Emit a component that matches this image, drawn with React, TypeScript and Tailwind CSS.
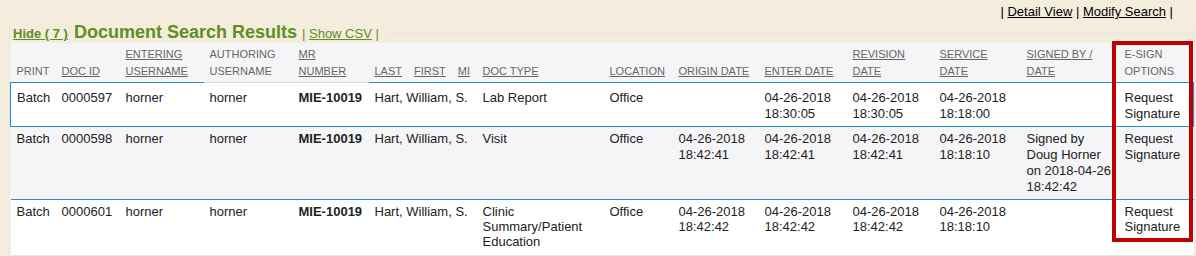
import React from "react";

type Row = {
  docId: string;
  entering: string;
  authoring: string;
  mr: string;
  name: string;
  docType: string[];
  origin: string[];
  enter: string[];
  revision: string[];
  service: string[];
  signed: string[];
  bg: string;
  pad: string;
  selected?: boolean;
};

const rows: Row[] = [
  {
    docId: "0000597",
    entering: "horner",
    authoring: "horner",
    mr: "MIE-10019",
    name: "Hart, William, S.",
    docType: ["Lab Report"],
    origin: [],
    enter: ["04-26-2018", "18:30:05"],
    revision: ["04-26-2018", "18:30:05"],
    service: ["04-26-2018", "18:18:00"],
    signed: [],
    bg: "bg-white",
    pad: "pt-[7px] pb-[4px] leading-[16px]",
    selected: true,
  },
  {
    docId: "0000598",
    entering: "horner",
    authoring: "horner",
    mr: "MIE-10019",
    name: "Hart, William, S.",
    docType: ["Visit"],
    origin: ["04-26-2018", "18:42:41"],
    enter: ["04-26-2018", "18:42:41"],
    revision: ["04-26-2018", "18:42:41"],
    service: ["04-26-2018", "18:18:10"],
    signed: ["Signed by", "Doug Horner", "on 2018-04-26", "18:42:42"],
    bg: "bg-[#f5f5f7]",
    pad: "pt-[4px] pb-[4px] leading-[16px]",
  },
  {
    docId: "0000601",
    entering: "horner",
    authoring: "horner",
    mr: "MIE-10019",
    name: "Hart, William, S.",
    docType: ["Clinic", "Summary/Patient", "Education"],
    origin: ["04-26-2018", "18:42:42"],
    enter: ["04-26-2018", "18:42:42"],
    revision: ["04-26-2018", "18:42:42"],
    service: ["04-26-2018", "18:18:10"],
    signed: [],
    bg: "bg-white",
    pad: "pt-[4px] pb-[6px] leading-[15px]",
  },
];

function Lines({ lines }: { lines: string[] }) {
  return (
    <>
      {lines.map((l, i) => (
        <div key={i} className="whitespace-nowrap">
          {l}
        </div>
      ))}
    </>
  );
}

function Th({
  children,
  line = "border-[#1e8fd0]",
}: {
  children: React.ReactNode;
  line?: string;
}) {
  return (
    <th
      className={`px-[6px] pt-[3px] pb-[2px] text-left align-bottom font-normal text-[11px] leading-[17px] text-[#666] border-b ${line}`}
    >
      {children}
    </th>
  );
}

export default function App() {
  return (
    <div className="relative w-[1196px] h-[256px] overflow-hidden bg-[#f4ecdd] font-['Liberation_Sans',Arial,sans-serif] text-[#222]">
      <div className="flex justify-end pr-[23px] pt-[4px] h-[21px] text-[13px] leading-[16px] text-black">
        <span>
          |{" "}
          <span className="underline">Detail View</span> |{" "}
          <span className="underline">Modify Search</span> |
        </span>
      </div>

      <div className="ml-[9px] mr-[1px] border-l border-r border-[#e9e6e0]">
        <div className="flex items-baseline h-[22px] pl-[3px] text-[#5e8f22]">
          <span className="text-[13px] font-bold underline">Hide ( 7 )</span>
          <span className="ml-[6px] text-[18px] leading-[22px] font-bold">
            Document Search Results
          </span>
          <span className="ml-[5px] text-[13px]">
            | <span className="underline">Show CSV</span> |
          </span>
          <div className="ml-[6px] flex-1 h-px self-center translate-y-[1px] bg-[#e9e6e0]" />
        </div>

        <div className="bg-[#f5f5f7]">
          <table className="table-fixed border-collapse w-[1183px] text-[13px]">
            <colgroup>
              <col className="w-[45px]" />
              <col className="w-[64px]" />
              <col className="w-[84px]" />
              <col className="w-[89px]" />
              <col className="w-[76px]" />
              <col className="w-[108px]" />
              <col className="w-[127px]" />
              <col className="w-[69px]" />
              <col className="w-[86px]" />
              <col className="w-[88px]" />
              <col className="w-[87px]" />
              <col className="w-[87px]" />
              <col className="w-[98px]" />
              <col className="w-[75px]" />
            </colgroup>
            <thead>
              <tr className="h-[38px]">
                <Th>PRINT</Th>
                <Th>
                  <span className="underline">DOC ID</span>
                </Th>
                <Th>
                  <span className="underline">
                    ENTERING
                    <br />
                    USERNAME
                  </span>
                </Th>
                <Th line="border-[#dcdcdc]">
                  AUTHORING
                  <br />
                  USERNAME
                </Th>
                <Th line="border-[#dcdcdc]">
                  <span className="underline">
                    MR
                    <br />
                    NUMBER
                  </span>
                </Th>
                <Th>
                  <div className="flex gap-[12px]">
                    <span className="underline">LAST</span>
                    <span className="underline">FIRST</span>
                    <span className="underline">MI</span>
                  </div>
                </Th>
                <Th>
                  <span className="underline">DOC TYPE</span>
                </Th>
                <Th>
                  <span className="underline">LOCATION</span>
                </Th>
                <Th>
                  <span className="underline whitespace-nowrap">ORIGIN DATE</span>
                </Th>
                <Th>
                  <span className="underline whitespace-nowrap">ENTER DATE</span>
                </Th>
                <Th>
                  <span className="underline">
                    REVISION
                    <br />
                    DATE
                  </span>
                </Th>
                <Th>
                  <span className="underline">
                    SERVICE
                    <br />
                    DATE
                  </span>
                </Th>
                <Th>
                  <span className="underline whitespace-nowrap">
                    SIGNED BY /
                    <br />
                    DATE
                  </span>
                </Th>
                <Th>
                  E-SIGN
                  <br />
                  OPTIONS
                </Th>
              </tr>
            </thead>
            <tbody>
              {rows.map((r, i) => {
                const last = i === rows.length - 1;
                const td = `px-[6px] ${r.pad} align-top border-b ${
                  last ? "border-[#e6e6e8]" : "border-[#1e8fd0]"
                }`;
                return (
                  <tr key={r.docId} className={r.bg}>
                    <td className={`${td} ${r.selected ? "border-l border-l-[#1e8fd0]" : ""}`}>Batch</td>
                    <td className={td}>{r.docId}</td>
                    <td className={td}>{r.entering}</td>
                    <td className={td}>{r.authoring}</td>
                    <td className={`${td} font-bold`}>{r.mr}</td>
                    <td className={`${td} whitespace-nowrap`}>{r.name}</td>
                    <td className={td}>
                      <Lines lines={r.docType} />
                    </td>
                    <td className={td}>Office</td>
                    <td className={td}>
                      <Lines lines={r.origin} />
                    </td>
                    <td className={td}>
                      <Lines lines={r.enter} />
                    </td>
                    <td className={td}>
                      <Lines lines={r.revision} />
                    </td>
                    <td className={td}>
                      <Lines lines={r.service} />
                    </td>
                    <td className={td}>
                      <Lines lines={r.signed} />
                    </td>
                    <td className={`${td} ${r.selected ? "border-r border-r-[#1e8fd0]" : ""}`}>
                      <Lines lines={["Request", "Signature"]} />
                    </td>
                  </tr>
                );
              })}
            </tbody>
          </table>
          <div className="h-[8px]" />
        </div>
      </div>

      <div className="absolute left-[1112px] top-[41px] w-[81px] h-[201px] border-[4px] border-[#c00000] pointer-events-none" />
    </div>
  );
}
